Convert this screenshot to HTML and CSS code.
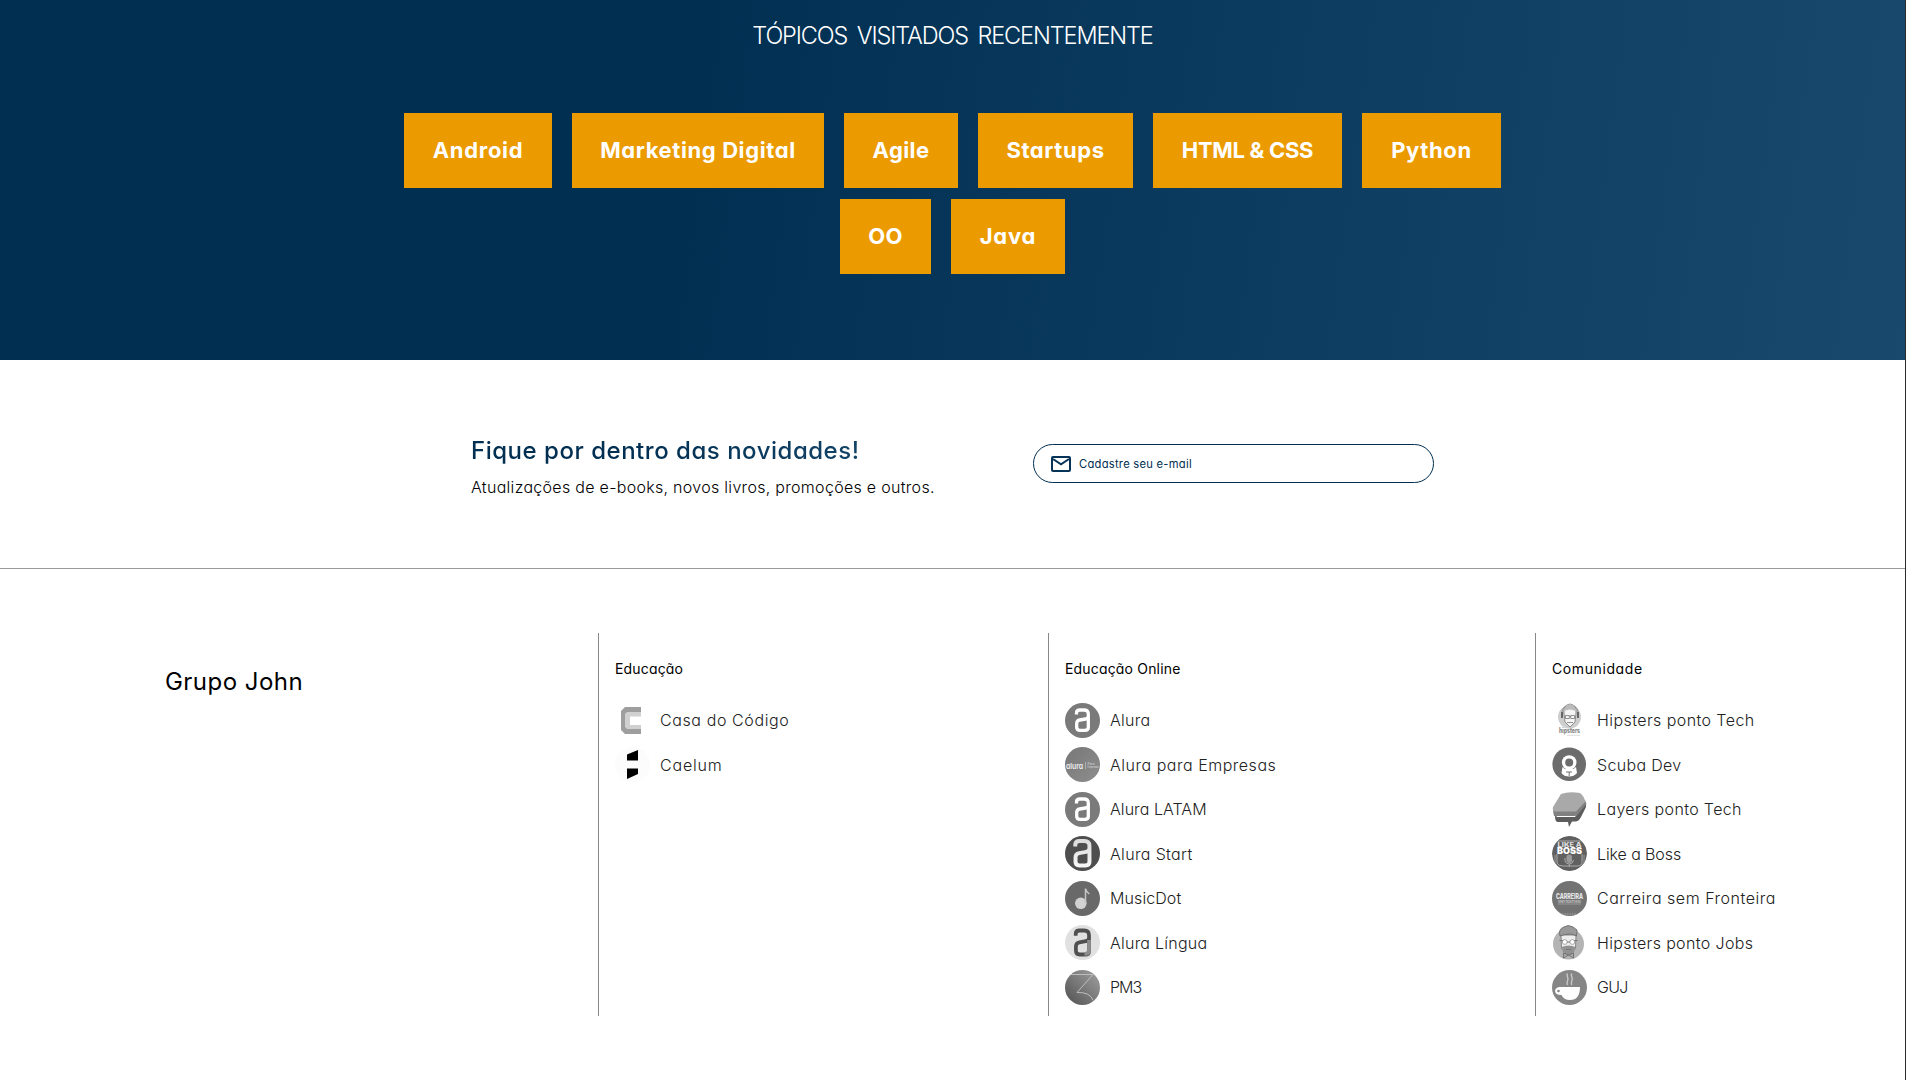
FILE: index.html
```html
<!DOCTYPE html>
<html lang="pt-BR">
<head>
<meta charset="utf-8">
<title>Grupo John</title>
<link rel="stylesheet" href="styles.css">
</head>
<body>
<svg width="0" height="0" class="defs" aria-hidden="true">
  <defs>
    <linearGradient id="shade" x1="1" y1="0" x2="0" y2="1"><stop offset="0" stop-color="#a2a2a2"/><stop offset="1" stop-color="#505050"/></linearGradient>
    <linearGradient id="soft" x1="0" y1="0" x2="1" y2="1"><stop offset="0" stop-color="#777"/><stop offset="1" stop-color="#8e8e8e"/></linearGradient>
    <linearGradient id="silver" x1="0" y1="0" x2="0" y2="1"><stop offset="0" stop-color="#dcdcdc"/><stop offset="1" stop-color="#f6f6f6"/></linearGradient>
    <clipPath id="disc"><circle cx="17.5" cy="17.5" r="17.5"/></clipPath>
    <path id="letter-a" d="M11.500 11.500V10Q11.500 7 15 7H19Q23.300 7 23.300 11V24.500Q23.300 27.300 20 27.300H15Q11.700 27.300 11.700 24.200V20.500Q11.700 17.500 14.700 17L20.500 16Q23.300 15.500 23.300 13" fill="none" stroke-width="3.300"/>
  </defs>
</svg>
<main class="page">
  <section class="topics">
    <h2 class="topics-title">TÓPICOS VISITADOS RECENTEMENTE</h2>
    <ul class="topic-list">
      <li class="topic w-android">Android</li>
      <li class="topic w-marketing">Marketing Digital</li>
      <li class="topic w-agile">Agile</li>
      <li class="topic w-startups">Startups</li>
      <li class="topic w-html">HTML &amp; CSS</li>
      <li class="topic w-python">Python</li>
      <li class="topic w-oo">OO</li>
      <li class="topic w-java">Java</li>
    </ul>
  </section>

  <section class="newsletter">
    <div class="news-copy">
      <h2 class="news-title">Fique por dentro das novidades!</h2>
      <p class="news-text">Atualizações de e-books, novos livros, promoções e outros.</p>
    </div>
    <div class="email">
      <svg class="mail" viewBox="0 0 20 16"><rect x="1" y="1" width="18" height="14" rx="1" fill="none" stroke="#063458" stroke-width="2"/><path d="M2 3L10 8.300L18 3" fill="none" stroke="#063458" stroke-width="2"/></svg>
      <span class="placeholder">Cadastre seu e-mail</span>
    </div>
  </section>

  <footer class="footer">
    <div class="brand">Grupo John</div>
    <section class="group">
      <h3 class="group-title t1">Educação</h3>
      <ul class="links">
        <li class="link"><svg class="logo" viewBox="0 0 35 35"><path d="M26 4H10L6 8V27L10 31H26Z" fill="#9e9e9e"/><path d="M26 9H12L10 11V24L12 26H26Z" fill="#d0d0d0"/><path d="M26 13.500H15V22H26Z" fill="#fff"/></svg><span class="s58">Casa do Código</span></li>
        <li class="link"><svg class="logo" viewBox="0 0 35 35"><circle cx="17.500" cy="17.500" r="17.500" fill="#fcfcfc"/><path d="M12 7.500L23 3V13.500H12ZM12 21.500H23V27L12 32Z" fill="#000"/></svg><span class="s72">Caelum</span></li>
      </ul>
    </section>
    <section class="group">
      <h3 class="group-title t1">Educação Online</h3>
      <ul class="links">
        <li class="link"><svg class="logo" viewBox="0 0 35 35"><circle cx="17.500" cy="17.500" r="17.500" fill="#7a7a7a"/><use href="#letter-a" stroke="#fff"/></svg><span class="s30">Alura</span></li>
        <li class="link"><svg class="logo" viewBox="0 0 35 35"><circle cx="17.500" cy="17.500" r="17.500" fill="url(#soft)"/><text x="1" y="21.500" class="mark-alura" textLength="17" lengthAdjust="spacingAndGlyphs">alura</text><path d="M20.500 15V22" stroke="#ccc" stroke-width=".6"/><text x="22.500" y="18" class="mark-micro">Para</text><text x="22.500" y="21" class="mark-micro" textLength="11" lengthAdjust="spacingAndGlyphs">Empresas</text></svg><span class="s50">Alura para Empresas</span></li>
        <li class="link"><svg class="logo" viewBox="0 0 35 35"><circle cx="17.500" cy="17.500" r="17.500" fill="#7a7a7a"/><use href="#letter-a" stroke="#fff"/></svg><span class="s10">Alura LATAM</span></li>
        <li class="link"><svg class="logo" viewBox="0 0 35 35"><circle cx="17.500" cy="17.500" r="17.500" fill="#4e4e4e"/><use href="#letter-a" stroke="url(#silver)" transform="translate(-3.500 -3.300) scale(1.200)"/></svg><span class="s35">Alura Start</span></li>
        <li class="link"><svg class="logo" viewBox="0 0 35 35"><circle cx="17.500" cy="17.500" r="17.500" fill="#696969"/><circle cx="15.800" cy="22.300" r="5.800" fill="#d2d2d2"/><path d="M20.500 22V7.500Q21 10.500 24.300 13" fill="none" stroke="#c6c6c6" stroke-width="1.500"/></svg><span class="s12">MusicDot</span></li>
        <li class="link"><svg class="logo" viewBox="0 0 35 35"><circle cx="17.500" cy="17.500" r="17.500" fill="#e1e1e1"/><use href="#letter-a" stroke="#505050" transform="translate(-2.300 -2.700) scale(1.130 1.180)"/><path d="M24 15V25Q24 29 19.500 29" fill="none" stroke="#8d8d8d" stroke-width="3.700"/></svg><span class="s27">Alura Língua</span></li>
        <li class="link"><svg class="logo" viewBox="0 0 35 35"><circle cx="17.500" cy="17.500" r="17.500" fill="url(#shade)"/><path d="M6 4.500H28L12 22.500Q25 22 28 30" fill="none" stroke="#bdbdbd" stroke-width="1"/></svg><span class="n120">PM3</span></li>
      </ul>
    </section>
    <section class="group">
      <h3 class="group-title t2">Comunidade</h3>
      <ul class="links">
        <li class="link"><svg class="logo" viewBox="0 0 35 35"><circle cx="17.500" cy="14" r="11.500" fill="#cecece"/><path d="M12 10Q11 2 18 1Q25 2 24 10L23 19L18 24L13 19Z" fill="#f4f4f4" stroke="#777" stroke-width=".8"/><path d="M12.500 8Q12 2 18 1.500Q24 2 23.500 8Q18 5 12.500 8Z" fill="#bcbcbc"/><path d="M10 13Q9 5 14 3M26 13Q27 5 22 3M13.500 12.500H17.300V15.500H13.500ZM18.700 12.500H22.500V15.500H18.700ZM17.300 13.500H18.700M15 19.500H21" fill="none" stroke="#858585" stroke-width=".9"/><path d="M10 9V15M26 9V15" stroke="#666" stroke-width="2"/><text x="7" y="30" class="mark-hip" textLength="21" lengthAdjust="spacingAndGlyphs">hipsters</text><path d="M15 32.300H28" stroke="#ddd"/></svg><span class="s40">Hipsters ponto Tech</span></li>
        <li class="link"><svg class="logo" viewBox="0 0 35 35"><circle cx="17.200" cy="17.200" r="16.800" fill="#6c6c6c"/><circle cx="17.200" cy="15.500" r="7.300" fill="#fff"/><circle cx="17.200" cy="15.500" r="4" fill="#6c6c6c"/><path d="M10.500 20L13 22H21.500L24 20L25 26Q22 29.500 17.200 29.500Q12 29.500 9.500 26Z" fill="#fff"/><path d="M14 25H20M17.200 25V29M12 9V5.500" stroke="#707070"/></svg><span class="s32">Scuba Dev</span></li>
        <li class="link"><svg class="logo" viewBox="0 0 35 35"><path d="M1 20L5 25H23L34 11V15L29 25Q27 29 24 29.500H20L17 35L16 30H6Q3 30 3 24Z" fill="#5d5d5d"/><path d="M1 18L2 24H23Q25 24 26 22L34.500 12L33 8Z" fill="#808080"/><path d="M9 2Q17-1 28 1Q33 5 33 10L24 19.500H3Q0 19 1 15Z" fill="#a9a9a9"/></svg><span class="s36">Layers ponto Tech</span></li>
        <li class="link"><svg class="logo" viewBox="0 0 35 35"><g clip-path="url(#disc)"><circle cx="17.500" cy="17.500" r="17.500" fill="#606060"/><path d="M5 5H30M5 18V27Q6 30 11 30H25Q30 30 30 26V18" fill="none" stroke="#aaa" stroke-width="1"/><path d="M3 19V30M32 19V30" stroke="#999"/><rect x="14.500" y="18.500" width="5.500" height="8.500" rx="2.700" fill="#999"/><path d="M13 22V25Q14 28 17.300 28Q21 28 21.500 24M17.300 28V31" fill="none" stroke="#bbb" stroke-width=".8"/></g><text x="5.500" y="10.700" class="mark-like" textLength="24" lengthAdjust="spacingAndGlyphs">LIKE A</text><text x="5" y="18.300" class="mark-boss" textLength="25" lengthAdjust="spacingAndGlyphs">BOSS</text></svg><span class="n0">Like a Boss</span></li>
        <li class="link"><svg class="logo" viewBox="0 0 35 35"><circle cx="17.500" cy="17.500" r="17.500" fill="#737373"/><text x="4" y="18.300" class="mark-car" textLength="27" lengthAdjust="spacingAndGlyphs">CARREIRA</text><text x="6" y="21.700" class="mark-sem" textLength="23" lengthAdjust="spacingAndGlyphs">SEM FRONTEIRAS</text><path d="M6 23H29" stroke="#aaa" stroke-width=".7"/><path d="M10 33H25" stroke="#aaa" stroke-dasharray="1.500 1"/></svg><span class="s51">Carreira sem Fronteira</span></li>
        <li class="link"><svg class="logo" viewBox="0 0 35 35"><circle cx="16.500" cy="19" r="15.500" fill="#b4b4b4"/><path d="M9 10H24L23.500 23L20 29H13L9.500 23Z" fill="#eee" stroke="#707070" stroke-width=".8"/><path d="M8 11Q6 4 12 2Q16-1 21 2L25 5L24.500 11Q18 7 8 11Z" fill="#999" stroke="#6c6c6c" stroke-width=".9"/><path d="M9.500 22Q16.500 19 23.500 22L20 29H13Z" fill="#919191"/><path d="M7.500 15.500H11M22 15.500H25.500M14.500 17H18.500M14 24.500H19" stroke="#777"/><circle cx="12.800" cy="17" r="2.400" fill="#fff" stroke="#888" stroke-width=".7"/><circle cx="20.300" cy="17" r="2.400" fill="#fff" stroke="#888" stroke-width=".7"/><path d="M11.500 28V33L16.500 30L21.500 33V28L16.500 30Z" fill="#aaa" stroke="#666" stroke-width=".8"/></svg><span class="s36">Hipsters ponto Jobs</span></li>
        <li class="link"><svg class="logo" viewBox="0 0 35 35"><circle cx="17.500" cy="17.500" r="17.500" fill="#868686"/><path d="M8 17H28Q28 30 18 30Q11.500 30 9.500 25Q3 25 3 20.500Q4 17 8 17Z" fill="#fff"/><circle cx="6.500" cy="21" r="1.300" fill="#868686"/><path d="M15.500 3.500Q14.500 5 15.500 7T15.500 11T15.500 15M19.800 3.500Q18.800 5 19.800 7T19.800 11T19.800 15" fill="none" stroke="#c8c8c8" stroke-width="1.400"/></svg><span class="n90">GUJ</span></li>
      </ul>
    </section>
  </footer>
</main>
</body>
</html>
```
FILE: styles.css
```css
* { box-sizing: border-box; margin: 0; padding: 0; }
body {
  font-family: Inter, "Open Sans", sans-serif;
  font-feature-settings: "cv11";
  background: #2b2b2b;
  color: #000;
  overflow: hidden;
}
.defs { display: block; }
.page { width: calc(100% - 1px); height: 1080px; background: #fff; }
ul { list-style: none; }

.topics {
  height: 360px;
  padding-top: 18px;
  text-align: center;
  color: #fff;
  background: linear-gradient(97.54deg, #002f52 35.49%, #326589 165.37%);
}
.topics-title { font-size: 23.500px; font-weight: 300; line-height: 36px; letter-spacing: -1.120px; word-spacing: 4px; }
.topic-list {
  width: 1143px;
  margin: 59px auto 0;
  display: flex;
  flex-wrap: wrap;
  justify-content: center;
  gap: 11px 20px;
}
.topic {
  height: 75px;
  font-size: 22px;
  line-height: 75px;
  font-weight: 700;
  background: #eb9b00;
  white-space: nowrap;
}
.w-android { width: 148px; letter-spacing: .7px; }
.w-marketing { width: 252px; letter-spacing: .6px; }
.w-agile { width: 114px; letter-spacing: .4px; }
.w-startups { width: 155px; letter-spacing: .6px; }
.w-html { width: 189px; letter-spacing: -.3px; }
.w-python { width: 139px; letter-spacing: .6px; }
.w-oo { width: 91px; letter-spacing: .2px; }
.w-java { width: 114px; letter-spacing: .8px; }

.newsletter {
  height: 209px;
  padding-left: 471px;
  display: flex;
  border-bottom: 1px solid #9a9a9a;
}
.news-copy { width: 562px; padding-top: 73px; }
.news-title {
  width: 462px;
  font-size: 24px;
  line-height: 36px;
  font-weight: 500;
  letter-spacing: .52px;
  color: transparent;
  background: linear-gradient(97.54deg, #002f52 35.49%, #326589 165.37%);
  background-clip: text;
  -webkit-background-clip: text;
}
.news-text { margin-top: 6px; font-size: 16px; line-height: 24px; font-weight: 300; letter-spacing: .3px; }
.email {
  width: 401px;
  height: 39px;
  margin-top: 84px;
  padding-left: 17px;
  display: flex;
  align-items: center;
  gap: 8px;
  border: 1px solid #002f52;
  border-radius: 20px;
}
.mail { width: 20px; height: 16px; }
.placeholder { font-size: 11.200px; letter-spacing: .26px; color: #002f52; }

.footer {
  margin-top: 64px;
  height: 383px;
  display: grid;
  grid-template-columns: 598px 450px 487px 1fr;
}
.brand { padding: 31px 0 0 165px; font-size: 24px; line-height: 36px; letter-spacing: .46px; }
.group { border-left: 1px solid #888; padding: 25px 0 0 16px; }
.group-title { font-size: 14px; line-height: 21px; font-weight: 400; }
.t1 { letter-spacing: .17px; }
.t2 { letter-spacing: .6px; }
.links { margin-top: 19px; }
.link {
  height: 44.500px;
  display: flex;
  align-items: center;
  gap: 10px;
  font-size: 16px;
  line-height: 24px;
  font-weight: 300;
  color: #222;
  white-space: nowrap;
}
.logo { width: 35px; height: 35px; flex: none; }
.s10 { letter-spacing: .06px; }
.s12 { letter-spacing: .1px; }
.s27 { letter-spacing: .24px; }
.s30 { letter-spacing: .3px; }
.s32 { letter-spacing: .32px; }
.s35 { letter-spacing: .35px; }
.s36 { letter-spacing: .36px; }
.s40 { letter-spacing: .42px; }
.s50 { letter-spacing: .52px; }
.s51 { letter-spacing: .53px; }
.s58 { letter-spacing: .6px; }
.s72 { letter-spacing: .8px; }
.n0 { letter-spacing: -.1px; }
.n90 { letter-spacing: -.7px; }
.n120 { letter-spacing: -1px; }

.mark-alura { font-size: 8px; font-weight: 600; fill: #eee; }
.mark-micro { font-size: 3px; font-weight: 600; fill: #ccc; }
.mark-hip { font-size: 7px; font-weight: 800; fill: #858585; }
.mark-like { font-size: 6px; font-weight: 800; fill: #ddd; }
.mark-boss { font-size: 9px; font-weight: 900; fill: #fff; }
.mark-car { font-size: 7.500px; font-weight: 800; fill: #e8e8e8; }
.mark-sem { font-size: 3px; font-weight: 700; fill: #c4c4c4; }
```
